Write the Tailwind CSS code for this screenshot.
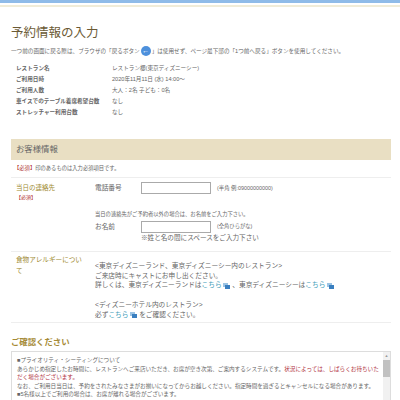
<!DOCTYPE html>
<html lang="ja">
<head>
    <meta charset="UTF-8">
    <title>予約情報の入力</title>
    <script src="https://cdn.jsdelivr.net/npm/@tailwindcss/browser@4"></script>
</head>
<body class="bg-white overflow-hidden font-['Liberation_Sans','Noto_Sans_CJK_JP',sans-serif] text-[#666]">
<div class="h-[400px] overflow-hidden">
    <!-- Top bar -->
    <div class="h-[3px] bg-[#8fbbe8]"></div>
    <div class="h-[4px] bg-white border-b-2 border-[#f0ecd8]"></div>

    <div class="pl-[11px] pr-[9px]">
        <h1 class="mt-[16px] text-[12.5px] leading-[20px] text-[#6b5a35]">予約情報の入力</h1>
        <p class="mt-[2px] text-[5.6px] leading-[12px] flex items-center whitespace-nowrap">一つ前の画面に戻る際は、ブラウザの「戻るボタン<span class="mx-[1px] w-[10px] h-[10px] rounded-full bg-[#4d90dc] text-white text-[7px] leading-[9px] text-center">←</span>」は使用せず、ページ最下部の「1つ前へ戻る」ボタンを使用してください。</p>

        <!-- Reservation summary -->
        <dl class="mt-[6px] ml-[5px] grid grid-cols-[96px_1fr] text-[5.6px] leading-[11px]">
            <dt class="font-bold">レストラン名</dt><dd>レストラン櫻(東京ディズニーシー)</dd>
            <dt class="font-bold">ご利用日時</dt><dd>2020年11月11日 (水) 14:00～</dd>
            <dt class="font-bold">ご利用人数</dt><dd>大人：2名 子ども：0名</dd>
            <dt class="font-bold">車イスでのテーブル着席希望台数</dt><dd>なし</dd>
            <dt class="font-bold">ストレッチャー利用台数</dt><dd>なし</dd>
        </dl>

        <!-- Customer info -->
        <h2 class="mt-[21px] h-[21px] pl-[5px] bg-[#e9dfc3] text-[8.4px] leading-[21px]">お客様情報</h2>
        <p class="h-[18px] pl-[3px] text-[5.3px] leading-[17px] border-b border-[#eee]"><span class="text-[#b03030]">【必須】</span>印のあるものは入力必須項目です。</p>

        <div class="flex border-b border-[#eee] h-[74px]">
            <div class="w-[84px] pl-[5px] pt-[5px] text-[6.5px] leading-[9px] text-[#a08a30]">当日の連絡先<br><span class="text-[#b03030] text-[5px]">【必須】</span></div>
            <div class="flex-1 pt-[4px] text-[6.7px]">
                <div class="flex items-center">
                    <span class="w-[46px]">電話番号</span>
                    <input class="w-[70px] h-[12px] border border-[#aaa] bg-white">
                    <span class="ml-[6px] text-[5.4px]">(半角 例:09000000000)</span>
                </div>
                <p class="mt-[16px] text-[5.3px] leading-[8px]">当日の連絡先がご予約者以外の場合は、お名前をご入力下さい。</p>
                <div class="mt-[3px] flex items-center">
                    <span class="w-[46px]">お名前</span>
                    <input class="w-[70px] h-[12px] border border-[#aaa] bg-white">
                    <span class="ml-[6px] text-[5.3px]">(全角ひらがな)</span>
                </div>
                <p class="ml-[46px] text-[6.6px] leading-[10px]">※姓と名の間にスペースをご入力下さい</p>
            </div>
        </div>

        <div class="flex border-b border-[#eee] h-[71px]">
            <div class="w-[84px] pl-[5px] pt-[2px] pr-[10px] text-[6.6px] leading-[11px] text-[#a08a30]">食物アレルギーについて</div>
            <div class="flex-1 pt-[9px] text-[6.7px] leading-[9.7px]">
                <p>&lt;東京ディズニーランド、東京ディズニーシー内のレストラン&gt;</p>
                <p>ご来店時にキャストにお申し出ください。</p>
                <p>詳しくは、東京ディズニーランドは<span class="text-[#3a9ab8]">こちら</span> <svg class="inline w-[7px] h-[6px]" viewBox="0 0 7 6"><rect x="0" y="0" width="5" height="4" fill="#9cc4e4"/><rect x="2" y="2" width="5" height="4" fill="#3a7fc0"/></svg> 、東京ディズニーシーは<span class="text-[#3a9ab8]">こちら</span> <svg class="inline w-[7px] h-[6px]" viewBox="0 0 7 6"><rect x="0" y="0" width="5" height="4" fill="#9cc4e4"/><rect x="2" y="2" width="5" height="4" fill="#3a7fc0"/></svg></p>
                <p class="mt-[10px]">&lt;ディズニーホテル内のレストラン&gt;</p>
                <p>必ず<span class="text-[#3a9ab8]">こちら</span> <svg class="inline w-[7px] h-[6px]" viewBox="0 0 7 6"><rect x="0" y="0" width="5" height="4" fill="#9cc4e4"/><rect x="2" y="2" width="5" height="4" fill="#3a7fc0"/></svg> をご確認ください。</p>
            </div>
        </div>

        <!-- Notes -->
        <h2 class="mt-[12px] text-[8.4px] leading-[14px] font-bold text-[#a58a35]">ご確認ください</h2>
        <div class="mt-[2px] border border-[#ddd] flex h-[60px]">
            <div class="flex-1 pl-[5px] pr-[4px] pt-[4px] text-[5.6px] leading-[8.6px]">
                <p>■プライオリティ・シーティングについて</p>
                <p>あらかじめ指定したお時間に、レストランへご来店いただき、お席が空き次第、ご案内するシステムです。<span class="text-[#b03040]">状況によっては、しばらくお待ちいただく場合がございます。</span></p>
                <p>なお、ご利用日当日は、予約をされたみなさまがお揃いになってからお越しください。指定時間を過ぎるとキャンセルになる場合があります。</p>
                <p>■5名様以上でご利用の場合は、お席が離れる場合がございます。</p>
            </div>
            <div class="w-[7px] bg-[#f1f1f1] text-[#999] text-[4px] leading-[8px] text-center">▲<div class="h-[17px] bg-[#c1c1c1]"></div></div>
        </div>
    </div>
</div>
</body>
</html>
